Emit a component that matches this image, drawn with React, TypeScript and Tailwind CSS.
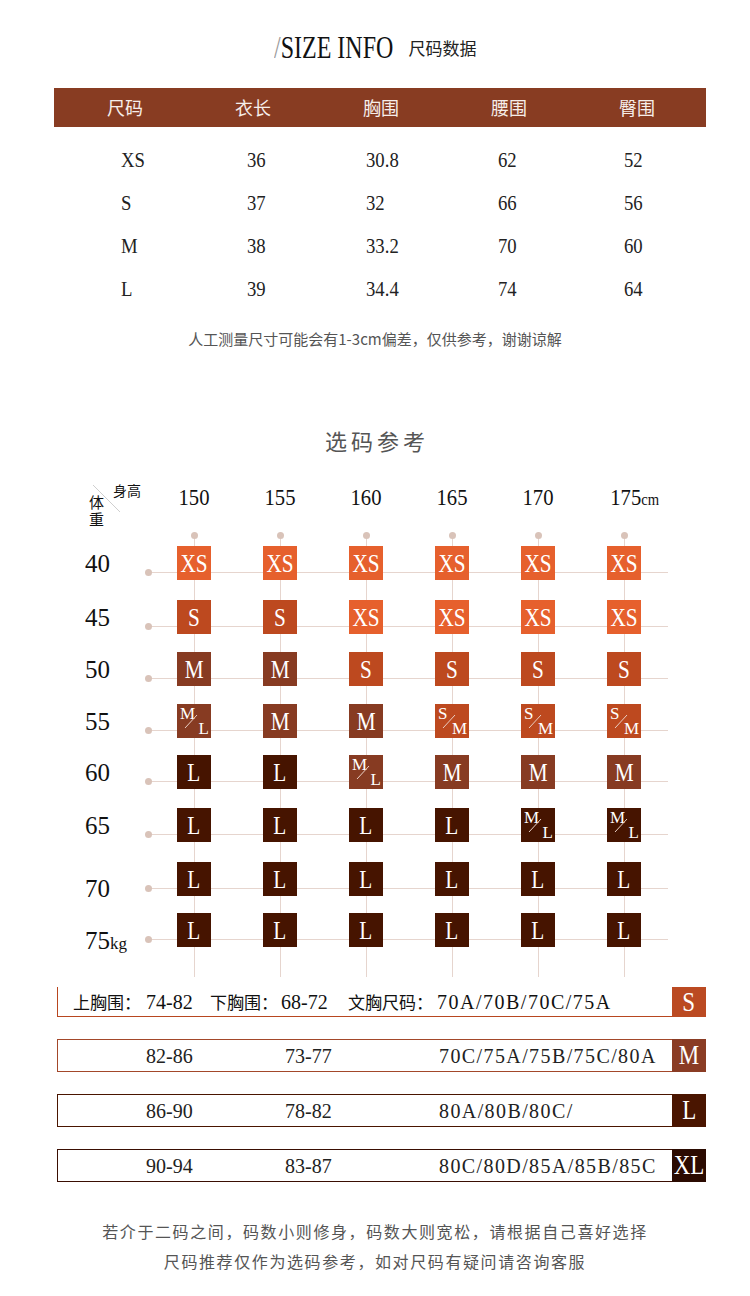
const serif = "font-['Liberation_Serif',serif]";
const cjk = "font-['Noto_Sans_CJK_SC','Noto_Sans',sans-serif]";

const sizeRows = [
  ['XS', '36', '30.8', '62', '52'],
  ['S', '37', '32', '66', '56'],
  ['M', '38', '33.2', '70', '60'],
  ['L', '39', '34.4', '74', '64'],
];

const heights = ['150', '155', '160', '165', '170', '175'];

const boxColor: Record<string, string> = {
  XS: 'bg-[#e6602d]',
  S: 'bg-[#bd491f]',
  M: 'bg-[#873b22]',
  L: 'bg-[#461400]',
};

type Cell = { a: string; b?: string; c: string };

const chartRows: { w: string; h: string; unit?: string; lbl: string; cells: Cell[] }[] = [
  { w: '40', h: 'h-[54px]', lbl: '', cells: Array(6).fill({ a: 'XS', c: 'XS' }) },
  {
    w: '45', h: 'h-[52px]', lbl: '',
    cells: [{ a: 'S', c: 'S' }, { a: 'S', c: 'S' }, { a: 'XS', c: 'XS' }, { a: 'XS', c: 'XS' }, { a: 'XS', c: 'XS' }, { a: 'XS', c: 'XS' }],
  },
  {
    w: '50', h: 'h-[52px]', lbl: '',
    cells: [{ a: 'M', c: 'M' }, { a: 'M', c: 'M' }, { a: 'S', c: 'S' }, { a: 'S', c: 'S' }, { a: 'S', c: 'S' }, { a: 'S', c: 'S' }],
  },
  {
    w: '55', h: 'h-[51px]', lbl: '',
    cells: [
      { a: 'M', b: 'L', c: 'M' }, { a: 'M', c: 'M' }, { a: 'M', c: 'M' },
      { a: 'S', b: 'M', c: 'S' }, { a: 'S', b: 'M', c: 'S' }, { a: 'S', b: 'M', c: 'S' },
    ],
  },
  {
    w: '60', h: 'h-[53px]', lbl: '',
    cells: [{ a: 'L', c: 'L' }, { a: 'L', c: 'L' }, { a: 'M', b: 'L', c: 'M' }, { a: 'M', c: 'M' }, { a: 'M', c: 'M' }, { a: 'M', c: 'M' }],
  },
  {
    w: '65', h: 'h-[54px]', lbl: '',
    cells: [{ a: 'L', c: 'L' }, { a: 'L', c: 'L' }, { a: 'L', c: 'L' }, { a: 'L', c: 'L' }, { a: 'M', b: 'L', c: 'L' }, { a: 'M', b: 'L', c: 'L' }],
  },
  { w: '70', h: 'h-[51px]', lbl: 'mt-[9px]', cells: Array(6).fill({ a: 'L', c: 'L' }) },
  { w: '75', unit: 'kg', h: 'h-[64px]', lbl: 'mt-[10px]', cells: Array(6).fill({ a: 'L', c: 'L' }) },
];

function SizeBox({ cell }: { cell: Cell }) {
  if (cell.b) {
    return (
      <div className={`relative z-10 size-[34px] ${boxColor[cell.c]} text-white ${serif}`}>
        <span className="absolute left-[3px] top-[1px] text-[17px] leading-none">{cell.a}</span>
        <svg className="absolute inset-0" width="34" height="34" viewBox="0 0 34 34">
          <line x1="8" y1="24" x2="20" y2="11" stroke="#e9cfc4" strokeWidth="1" />
        </svg>
        <span className="absolute right-[2px] top-[16px] text-[17px] leading-none">{cell.b}</span>
      </div>
    );
  }
  return (
    <div className={`relative z-10 flex size-[34px] items-center justify-center ${boxColor[cell.c]} text-white ${serif}`}>
      <span className="inline-block scale-x-[0.85] text-[25px] leading-none">{cell.a}</span>
    </div>
  );
}

const bars = [
  { v1: '82-86', v2: '73-77', v3: '70C/75A/75B/75C/80A', tag: 'M', border: 'border-[#a3472a]', badge: 'bg-[#8a3c24]' },
  { v1: '86-90', v2: '78-82', v3: '80A/80B/80C/', tag: 'L', border: 'border-[#4a1500]', badge: 'bg-[#4a1500]' },
  { v1: '90-94', v2: '83-87', v3: '80C/80D/85A/85B/85C', tag: 'XL', border: 'border-[#3a0e02]', badge: 'bg-[#2b0b01]' },
];

export default function App() {
  return (
    <div className="min-h-[1296px] w-[750px] bg-white pb-[20px]">
      {/* title */}
      <div className="mt-[32px] flex h-[30px] items-center justify-center">
        <div className="w-[120px]">
          <span className={`inline-block origin-left scale-x-[0.75] whitespace-nowrap text-[32px] leading-none text-[#111] ${serif}`}>
            <span className="text-[#9a9a9a]">/</span>SIZE INFO
          </span>
        </div>
        <span className={`ml-[15px] text-[17px] leading-none text-[#222] ${cjk}`}>尺码数据</span>
      </div>

      {/* size table */}
      <div className={`ml-[54px] mt-[26px] grid h-[39px] w-[652px] grid-cols-5 items-center bg-[#883c22] pl-[7px] pr-[5px] text-[18px] text-[#f6eeea] ${cjk}`}>
        <span className="text-center">尺码</span>
        <span className="text-center">衣长</span>
        <span className="text-center">胸围</span>
        <span className="text-center">腰围</span>
        <span className="text-center">臀围</span>
      </div>
      <div className="mt-[11px]">
        {sizeRows.map((r) => (
          <div key={r[0]} className={`grid h-[43px] grid-cols-[126px_119px_132px_126px_1fr] items-center pl-[121px] text-[22px] text-[#222] ${serif}`}>
            {r.map((v, i) => (
              <span key={i} className="inline-block origin-left scale-x-[0.85] leading-none">{v}</span>
            ))}
          </div>
        ))}
      </div>
      <p className={`mt-[19px] text-center text-[15px] leading-[20px] text-[#555] ${cjk}`}>
        人工测量尺寸可能会有1-3cm偏差，仅供参考，谢谢谅解
      </p>

      <h2 className={`mt-[76px] h-[30px] pl-[4px] text-center text-[22px] leading-[30px] tracking-[4px] text-[#555] ${cjk}`}>选码参考</h2>

      {/* chart */}
      <div className="relative mt-[20px]">
        {/* vertical guides */}
        <div className="absolute left-[151px] top-[60px] grid h-[442px] grid-cols-[repeat(6,86px)]">
          {heights.map((h) => (
            <div key={h} className="relative flex justify-center">
              <div className="h-full w-px bg-[#e6d5ce]" />
              <div className="absolute top-[-3.5px] size-[7px] rounded-full bg-[#d9c3b9]" />
            </div>
          ))}
        </div>

        <div className="relative flex h-[71px] items-start">
          <div className="relative h-[50px] w-[151px]">
            <svg className="absolute left-0 top-0" width="151" height="50" viewBox="0 0 151 50">
              <line x1="93" y1="10" x2="120" y2="37" stroke="#cfcfcf" strokeWidth="1" />
            </svg>
            <span className={`absolute left-[113px] top-[7px] text-[14px] leading-[16px] text-[#111] ${cjk}`}>身高</span>
            <span className={`absolute left-[88px] top-[20px] whitespace-nowrap text-[15px] leading-[16px] tracking-[2px] text-[#111] [writing-mode:vertical-rl] ${cjk}`}>
              体重
            </span>
          </div>
          {heights.map((h) => (
            <div key={h} className={`flex h-[44px] w-[86px] items-center justify-center text-[#111] ${serif}`}>
              {h === '175' ? (
                <span className="inline-block scale-x-[0.86] whitespace-nowrap pl-[24px] text-[24px] leading-none">
                  175<span className="text-[17px]">cm</span>
                </span>
              ) : (
                <span className="inline-block scale-x-[0.86] text-[24px] leading-none">{h}</span>
              )}
            </div>
          ))}
        </div>

        {chartRows.map((row) => (
          <div key={row.w} className={`relative flex items-start ${row.h}`}>
            <div className="absolute left-[148px] top-[26px] h-px w-[520px] bg-[#e6d5ce]" />
            <div className="absolute left-[144.5px] top-[22.5px] size-[7px] rounded-full bg-[#d9c3b9]" />
            <div className={`flex h-[34px] w-[151px] items-center pl-[85px] text-[25px] leading-none text-[#111] ${serif} ${row.lbl}`}>
              <span>{row.w}</span>
              {row.unit && <span className="mt-[6px] text-[17px]">{row.unit}</span>}
            </div>
            {row.cells.map((c, i) => (
              <div key={i} className="flex w-[86px] justify-center">
                <SizeBox cell={c} />
              </div>
            ))}
          </div>
        ))}
      </div>

      {/* bra size bars */}
      <div className="ml-[57px] mt-[10px] flex h-[30px] w-[649px]">
        <div className="flex flex-1 items-center border-b-[1.5px] border-l-[1.5px] border-[#b8461f] pl-[15px] text-[#111]">
          <span className={`w-[73px] text-[17px] ${cjk}`}>上胸围：</span>
          <span className={`w-[64px] text-[20px] ${serif}`}>74-82</span>
          <span className={`w-[71px] text-[17px] ${cjk}`}>下胸围：</span>
          <span className={`w-[67px] text-[20px] ${serif}`}>68-72</span>
          <span className={`w-[89px] text-[17px] ${cjk}`}>文胸尺码：</span>
          <span className={`text-[20px] tracking-[1.5px] ${serif}`}>70A/70B/70C/75A</span>
        </div>
        <div className={`flex w-[34px] items-center justify-center bg-[#bb4a22] text-white ${serif}`}>
          <span className="inline-block scale-x-[0.85] text-[27px] leading-none">S</span>
        </div>
      </div>

      {bars.map((b) => (
        <div key={b.tag} className="ml-[57px] mt-[22px] flex h-[33px] w-[649px]">
          <div className={`flex flex-1 items-center border-[1.5px] border-r-0 ${b.border} pl-[88px] text-[20px] text-[#222] ${serif}`}>
            <span className="w-[139px]">{b.v1}</span>
            <span className="w-[154px]">{b.v2}</span>
            <span className="tracking-[1.4px]">{b.v3}</span>
          </div>
          <div className={`flex w-[34px] items-center justify-center ${b.badge} text-white ${serif}`}>
            <span className="inline-block scale-x-[0.85] whitespace-nowrap text-[27px] leading-none">{b.tag}</span>
          </div>
        </div>
      ))}

      <div className={`mt-[34px] text-center text-[16px] leading-[30px] tracking-[1.6px] text-[#555] ${cjk}`}>
        <p>若介于二码之间，码数小则修身，码数大则宽松，请根据自己喜好选择</p>
        <p>尺码推荐仅作为选码参考，如对尺码有疑问请咨询客服</p>
      </div>
    </div>
  );
}
